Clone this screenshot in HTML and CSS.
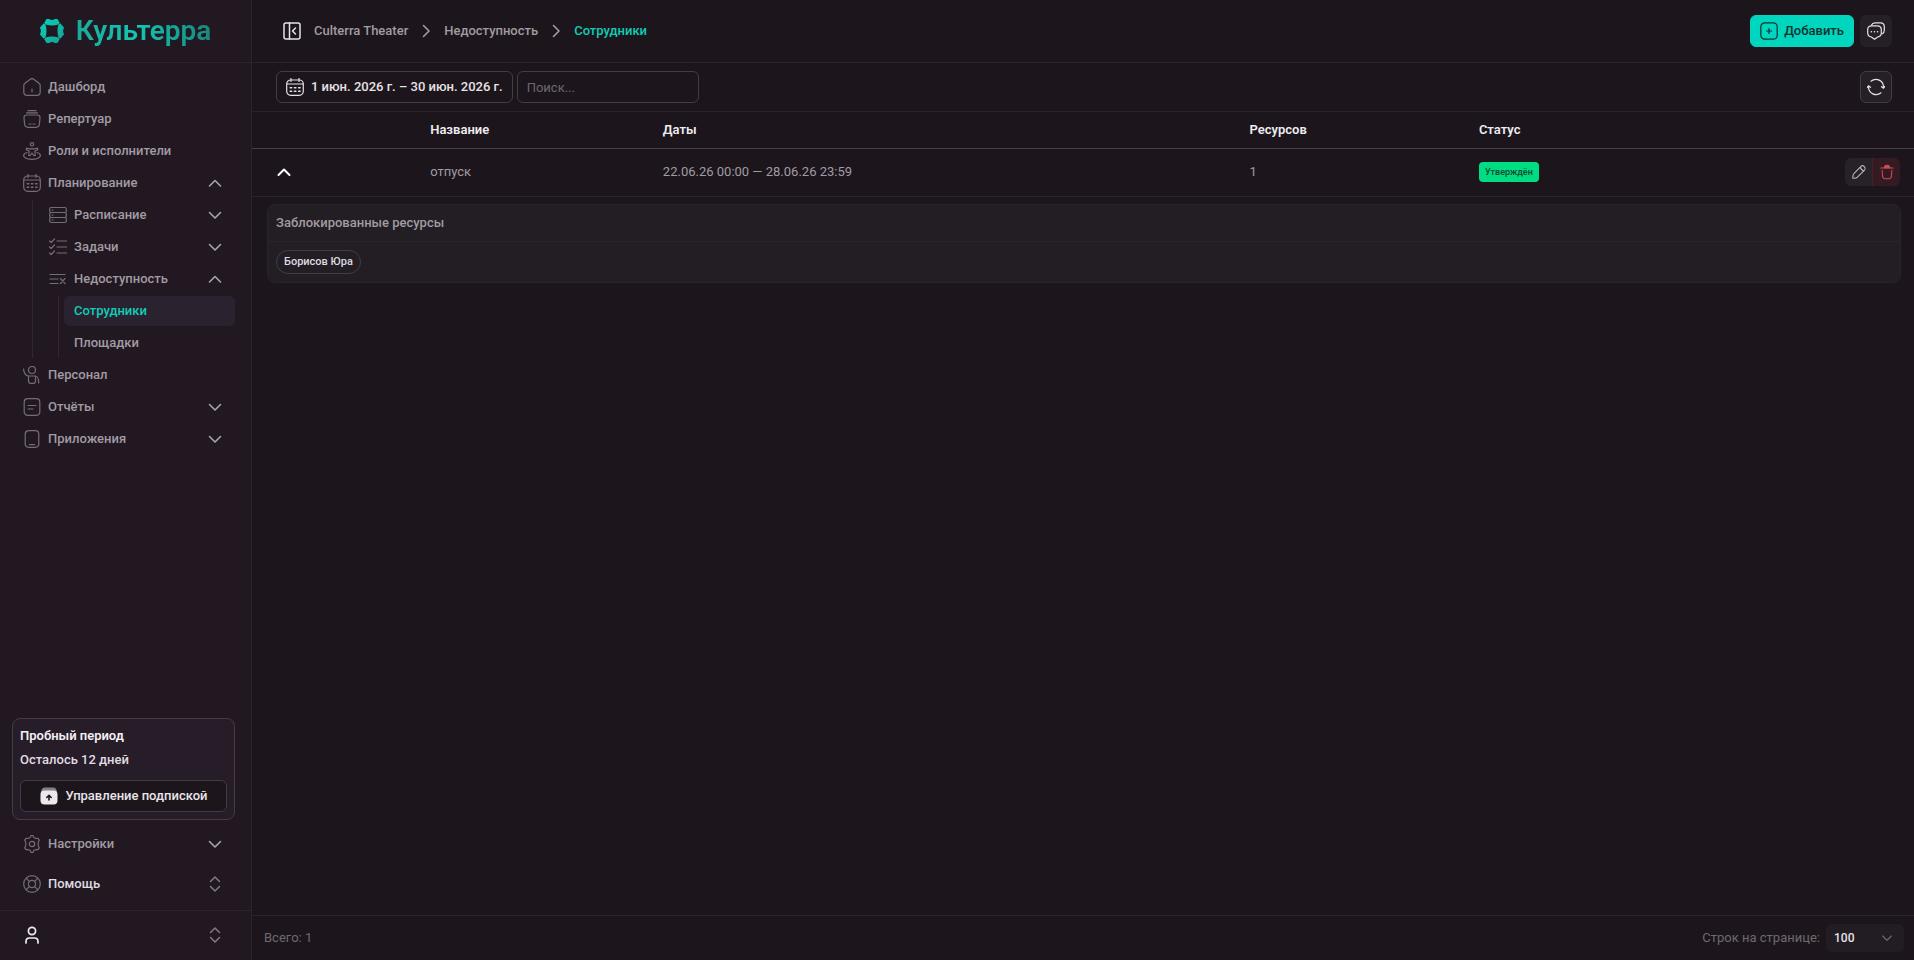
FILE: index.html
```html
<!DOCTYPE html>
<html lang="ru">
<head>
<meta charset="utf-8">
<title>Культерра — Сотрудники</title>
<link rel="stylesheet" href="styles.css">
</head>
<body>
<svg class="defs" aria-hidden="true">
  <symbol id="down" viewBox="0 0 18 18"><path d="M3.5 6.5 9 12l5.500-5.500"/></symbol>
  <symbol id="up" viewBox="0 0 18 18"><path d="M3.500 12 9 6.500 14.500 12"/></symbol>
  <symbol id="right" viewBox="0 0 18 18"><path d="M6.500 3.500 12 9l-5.500 5.500"/></symbol>
  <symbol id="updown" viewBox="0 0 18 18"><path d="M4.500 6.500 9 2l4.500 4.500M4.500 11.500 9 16l4.500-4.500"/></symbol>
  <symbol id="calendar" viewBox="0 0 18 18"><rect x=".7" y="2" width="16.600" height="15.300" rx="4"/><path d="M1 6h16M5 .5v3M13 .5v3"/><path stroke-width="1.500" stroke-dasharray="1.500 2.700" d="M4.200 9.700h11M4.200 13.200h11"/></symbol>
</svg>
<div class="app">
  <aside class="sidebar">
    <a class="brand" href="#">
      <svg class="brand-mark" viewBox="0 0 24 24"><defs><linearGradient id="g" x2="1" y2="1"><stop offset="0" stop-color="#08d2bd"/><stop offset="1" stop-color="#159f91"/></linearGradient></defs><path fill="url(#g)" fill-rule="evenodd" d="M6.500 0H9l3 1.300L15 0h2.500L19.500 3.500 24 8.500 23 12l1 3.500-4.500 5L17.500 24H15l-3-1.300L9 24H6.500l-2-3.500L0 15.500 1 12 0 8.500l4.500-5ZM5.500 5.500q2 6.500 0 13 6.500-2 13 0-2-6.500 0-13-6.500 2-13 0Z"/><path stroke="#221822" stroke-width=".7" d="m3.500 3.500 2 2m15-2-2 2m-15 15 2-2m15 2-2-2"/></svg>
      <span class="brand-name">Культерра</span>
    </a>
    <nav class="nav">
      <a class="item" href="#"><svg class="icon" viewBox="0 0 18 18"><path d="M.8 7.500q0-1.500 1.200-2.300l5.300-4q1.700-1.200 3.400 0l5.300 4q1.200.8 1.200 2.300V14q0 3.300-3.300 3.300H4.100Q.8 17.300.8 14ZM9 11v3"/></svg><span>Дашборд</span></a>
      <a class="item" href="#"><svg class="icon" viewBox="0 0 18 18"><path d="M1 8q-.2-3 3-3h10q3.200 0 3 3l-.6 6q-.3 3.300-3.500 3.300H5.100q-3.200 0-3.500-3.300ZM3.500 2.800h11M5 .7h8M6 14h2m2 0h2"/></svg><span>Репертуар</span></a>
      <a class="item" href="#"><svg class="icon" viewBox="0 0 18 18"><circle cx="9" cy="2.300" r="1.700"/><path d="M3.500 6q3 1.200 5.500.7 2.500.5 5.500-.7l.3 1.600-3 1.400.5 4.500h-1.500L9 11l-1.800 2.500H5.700L6.200 9l-3-1.400ZM4 10.500C-3 13 2 17.300 9 17.300s12-4.300 5-6.800"/></svg><span>Роли и исполнители</span></a>
      <details class="group" open>
        <summary class="item"><svg class="icon"><use href="#calendar"/></svg><span>Планирование</span><svg class="icon chev"><use href="#up"/></svg></summary>
        <div class="children">
          <a class="item" href="#"><svg class="icon" viewBox="0 0 18 18"><rect x=".7" y="1.500" width="16.600" height="5" rx="1.500"/><rect x=".7" y="6.500" width="16.600" height="5" rx="1.500"/><rect x=".7" y="11.500" width="16.600" height="5" rx="1.500"/><path d="M3 4h1m-1 5h1m-1 5h1"/></svg><span>Расписание</span><svg class="icon chev"><use href="#down"/></svg></a>
          <a class="item" href="#"><svg class="icon" viewBox="0 0 18 18"><path d="m.5 3 1.700 1.500L5.500 1M.5 9l1.700 1.500L5.500 7M.5 15l1.700 1.500L5.500 13M8 3h10M8 9h10M8 15h10"/></svg><span>Задачи</span><svg class="icon chev"><use href="#down"/></svg></a>
          <details class="group" open>
            <summary class="item"><svg class="icon" viewBox="0 0 18 18"><path d="M1 4.500h15M1 9h8M1 13.500h8M11.500 8.500l4.500 5m0-5-4.500 5"/></svg><span>Недоступность</span><svg class="icon chev"><use href="#up"/></svg></summary>
            <div class="children leaf">
              <a class="item active" href="#">Сотрудники</a>
              <a class="item" href="#">Площадки</a>
            </div>
          </details>
        </div>
      </details>
      <a class="item" href="#"><svg class="icon" viewBox="0 0 18 18"><circle cx="9" cy="4" r="3.500"/><path d="M.5 3c.5 4 2 7 5.500 7h6c3 0 3.700 2 3.700 7M5.500 10v5q0 2.300 2.300 2.300h2.400q2.300 0 2.300-2.300v-5"/></svg><span>Персонал</span></a>
      <a class="item" href="#"><svg class="icon" viewBox="0 0 18 18"><rect x="1.200" y=".7" width="15.600" height="16.600" rx="3.500"/><path d="M5 7.500h8M5 11h5"/></svg><span>Отчёты</span><svg class="icon chev"><use href="#down"/></svg></a>
      <a class="item" href="#"><svg class="icon" viewBox="0 0 18 18"><rect x="2.200" y=".7" width="13.600" height="16.600" rx="3.500"/><path d="M6.500 14.700h5"/></svg><span>Приложения</span><svg class="icon chev"><use href="#down"/></svg></a>
    </nav>
    <section class="trial">
      <strong>Пробный период</strong>
      <span>Осталось 12 дней</span>
      <button class="btn" type="button"><svg class="icon" viewBox="0 0 18 18"><path d="M1 6q0-5.500 4-5.500h8q4 0 4 5.500Z" fill="#858087" stroke="none"/><rect x=".5" y="3.500" width="17" height="14" rx="4" fill="#ece8ed" stroke="none"/><path d="M9 13V8.500m-2.200 2L9 8.300l2.200 2.200" stroke="#1d171e" stroke-width="1.600"/></svg><span>Управление подпиской</span></button>
    </section>
    <div class="lower">
      <a class="item" href="#"><svg class="icon" viewBox="0 0 18 18"><path d="m7 2.500 1-1.800h2l1 1.800 1.800 1 2.200-.1 1.300 1.800-1.100 2v3.600l1.100 2-1.300 1.800-2.200-.1-1.800 1-1 1.800H8l-1-1.800-1.800-1-2.200.1-1.300-1.800 1.100-2V7.200l-1.100-2L3 3.400l2.200.1Z"/><circle cx="9" cy="9" r="2.700"/></svg><span>Настройки</span><svg class="icon chev"><use href="#down"/></svg></a>
      <button class="item bright" type="button"><svg class="icon" viewBox="0 0 18 18"><circle cx="9" cy="9" r="8.300"/><circle cx="9" cy="9" r="3.600"/><path d="m3.300 3.300 3.200 3.200m8.200-3.200-3.200 3.200m-8.200 8.200 3.200-3.200m8.200 3.200-3.200-3.200"/></svg><span>Помощь</span><svg class="icon sort"><use href="#updown"/></svg></button>
    </div>
    <div class="account">
      <button class="item" type="button" aria-label="Профиль"><svg class="icon person" viewBox="0 0 18 18"><circle cx="9" cy="5" r="3.600"/><path d="M3 17v-1.500q0-3.500 3.500-3.500h5q3.500 0 3.500 3.500V17"/></svg><svg class="icon sort"><use href="#updown"/></svg></button>
    </div>
  </aside>

  <main class="main">
    <header class="header">
      <button class="plain" type="button" aria-label="Свернуть меню"><svg class="icon" viewBox="0 0 18 18"><rect x="1" y="1" width="16" height="16" rx="2"/><path d="M6.500 1v16M12.500 6 9.500 9l3 3"/></svg></button>
      <nav class="crumbs">
        <a href="#">Culterra Theater</a>
        <svg class="icon"><use href="#right"/></svg>
        <a href="#">Недоступность</a>
        <svg class="icon"><use href="#right"/></svg>
        <a class="current" href="#">Сотрудники</a>
      </nav>
      <button class="btn primary" type="button"><svg class="icon" viewBox="0 0 18 18"><rect x=".8" y=".8" width="16.400" height="16.400" rx="4"/><path d="M9 6.500v5M6.500 9h5"/></svg><span>Добавить</span></button>
      <button class="square" type="button" aria-label="Чат"><svg class="icon" viewBox="0 0 18 18"><path d="M4.500 3Q5.500.8 8 .8h5.500q3.800 0 3.800 4V8q0 3-2 3.800"/><path d="M.7 7.800q0-4 4-4h5.600q4 0 4 4v3q0 3.700-3.600 4.200L7.500 17.300 4.300 15Q.7 14.500.7 10.800Z"/><path stroke-width="1.500" d="M4.300 9.700h.1m3 0h.1m3 0h.1"/></svg></button>
    </header>

    <div class="toolbar">
      <button class="btn date" type="button"><svg class="icon"><use href="#calendar"/></svg><span>1 июн. 2026 г. – 30 июн. 2026 г.</span></button>
      <input class="search" type="text" placeholder="Поиск..." aria-label="Поиск">
      <button class="square outlined" type="button" aria-label="Обновить"><svg class="icon" viewBox="0 0 18 18"><path d="M4 3.200a7.600 7.600 0 0 1 12.500 6M14 14.800A7.600 7.600 0 0 1 1.500 8.800M14.500 8.700l2 1.500 1.300-1.800M.2 9.600l1.300-1.800 2 1.500"/></svg></button>
    </div>

    <div class="content">
      <table class="table">
        <colgroup><col class="c-open"><col class="c-name"><col class="c-dates"><col class="c-count"><col><col class="c-act"></colgroup>
        <thead>
          <tr><th></th><th>Название</th><th>Даты</th><th>Ресурсов</th><th>Статус</th><th></th></tr>
        </thead>
        <tbody>
          <tr class="row">
            <td class="open"><button class="plain" type="button" aria-label="Свернуть строку"><svg class="icon"><use href="#up"/></svg></button></td>
            <td>отпуск</td>
            <td>22.06.26 00:00 — 28.06.26 23:59</td>
            <td>1</td>
            <td><span class="badge">Утверждён</span></td>
            <td class="act"><div class="actions"><button type="button" aria-label="Изменить"><svg class="icon" viewBox="0 0 18 18"><path d="M2 16q-.3-4 1.500-5.500l8-8q1.700-1.500 3.500.5t.5 3.500l-8 8Q6 16.300 2 16ZM10.500 3.500q.5 3.500 4 4"/></svg></button><button class="danger" type="button" aria-label="Удалить"><svg class="icon" viewBox="0 0 18 18"><path d="M2 4.500h14M3.500 7l.5 6.500q.2 3 3 3h4q2.800 0 3-3l.5-6.500"/><path d="M6 4.300Q6 1.500 9 1.500t3 2.800Z" fill="currentColor"/></svg></button></div></td>
          </tr>
          <tr>
            <td class="details" colspan="6">
              <section class="panel">
                <h2>Заблокированные ресурсы</h2>
                <div class="chips"><span class="chip">Борисов Юра</span></div>
              </section>
            </td>
          </tr>
        </tbody>
      </table>
    </div>

    <footer class="footer">
      <span>Всего: 1</span>
      <label for="rows">Строк на странице:</label>
      <div class="select"><select id="rows"><option>100</option></select><svg class="icon"><use href="#down"/></svg></div>
    </footer>
  </main>
</div>
</body>
</html>
```
FILE: styles.css
```css
* { box-sizing: border-box; }
body {
  margin: 0;
  background: #1c161c;
  color: #a19ba2;
  font: 500 13px/20px Roboto, "Liberation Sans", sans-serif;
}
a { color: inherit; text-decoration: none; }
button, input, select { font: inherit; color: inherit; }
button { border: 0; background: none; padding: 0; cursor: pointer; }
.defs { display: none; }
.icon {
  width: 18px;
  height: 18px;
  flex: none;
  fill: none;
  stroke: currentColor;
  stroke-width: 1.2;
  stroke-linecap: round;
  stroke-linejoin: round;
}
.app { display: flex; height: 100vh; }

.sidebar {
  width: 252px;
  flex: none;
  display: flex;
  flex-direction: column;
  background: #221822;
  border-right: 1px solid #2c242d;
}
.brand {
  height: 63px;
  flex: none;
  display: flex;
  align-items: center;
  justify-content: center;
  gap: 12px;
  border-bottom: 1px solid #2d252e;
}
.brand-mark { width: 24px; height: 24px; }
.brand-name {
  font-size: 28px;
  line-height: 40px;
  font-weight: 600;
  color: transparent;
  background: linear-gradient(90deg, #1aaa99, #12c6b3 45%, #19877d);
  background-clip: text;
}
.nav {
  flex: 1;
  min-height: 0;
  padding: 9px 16px 0 12px;
  display: flex;
  flex-direction: column;
  gap: 2px;
}
.item {
  width: 100%;
  height: 30px;
  display: flex;
  align-items: center;
  gap: 7px;
  padding: 0 11px;
  border-radius: 6px;
  text-align: left;
  list-style: none;
  cursor: pointer;
}
.item .icon { color: #756d76; }
.item .chev, .item .sort { margin-left: auto; }
.item .chev { color: #aaa4ab; stroke-width: 1.6; }
.item .sort { color: #817a82; stroke-width: 1.5; }
.children {
  display: flex;
  flex-direction: column;
  gap: 2px;
  margin: 2px 0 0 20px;
  padding-left: 5px;
  border-left: 1px solid #30282f;
}
.children .children { margin-left: 20px; }
.leaf .item { padding: 0 10px; }
.item.active { background: #2b222f; color: #10cdb7; }

.trial {
  margin: 0 16px 0 12px;
  padding: 7px;
  border: 1px solid #443c44;
  border-radius: 8px;
  background: #261d29;
  color: #e0dce1;
  display: flex;
  flex-direction: column;
  gap: 4px;
}
.trial strong { font-weight: 600; color: #f2eff3; }
.trial .btn { margin-top: 6px; justify-content: center; color: #e8e4e9; }
.btn {
  height: 32px;
  display: flex;
  align-items: center;
  gap: 8px;
  padding: 0 10px;
  border: 1px solid #443c44;
  border-radius: 6px;
  background: #1c161c;
  white-space: nowrap;
}
.lower {
  padding: 9px 16px 11px 12px;
  display: flex;
  flex-direction: column;
  gap: 10px;
}
.item.bright { color: #dfdbe0; }
.account {
  padding: 9px 16px 10px 12px;
  border-top: 1px solid #2d252e;
}
.item .person { color: #eeebef; stroke-width: 1.7; }

.main { flex: 1; min-width: 0; display: flex; flex-direction: column; }
.header {
  height: 63px;
  flex: none;
  display: flex;
  align-items: center;
  padding: 0 22px 0 31px;
  border-bottom: 1px solid #2a232a;
}
.plain { display: flex; color: #e6e2e7; }
.plain .icon { stroke-width: 1.5; }
.crumbs {
  flex: 1;
  display: flex;
  align-items: center;
  gap: 9px;
  margin-left: 13px;
}
.crumbs .icon { stroke-width: 1.6; }
.crumbs .current { color: #10cdb7; }
.primary { background: #00d5be; border-color: #00d5be; color: #10302e; gap: 6px; padding: 0 9px; }
.square {
  width: 32px;
  height: 32px;
  margin-left: 6px;
  display: grid;
  place-items: center;
  border-radius: 6px;
  background: #252027;
  color: #e6e2e7;
}
.toolbar {
  height: 49px;
  flex: none;
  display: flex;
  align-items: center;
  gap: 4px;
  padding: 0 22px 0 24px;
  border-bottom: 1px solid #2a232a;
}
.date { color: #e6e2e7; gap: 7px; padding: 0 9px; }
.search {
  width: 182px;
  height: 32px;
  padding: 0 9px;
  border: 1px solid #443c44;
  border-radius: 6px;
  background: #1c161c;
  font-weight: 400;
}
.search::placeholder { color: #6d666e; }
.outlined { margin-left: auto; border: 1px solid #443c44; }

.content { flex: 1; min-height: 0; overflow: auto; }
.table { width: 100%; table-layout: fixed; border-collapse: separate; border-spacing: 0; font-weight: 400; }
.c-open { width: 10%; }
.c-name { width: 14%; }
.c-dates { width: 35.3%; }
.c-count { width: 13.8%; }
.c-act { width: 80px; }
.table th {
  height: 37px;
  padding: 0 12px;
  text-align: left;
  font-weight: 600;
  color: #efecf0;
  border-bottom: 1px solid #484149;
}
.row td { height: 48px; padding: 0 12px 2px; border-bottom: 1px solid #2a232a; }
.table .open { padding-left: 23px; }
.open .icon { stroke-width: 2; color: #fff; }
.badge {
  display: inline-block;
  padding: 0 6px;
  border-radius: 4px;
  background: #00dc82;
  color: #12472f;
  font-size: 9px;
  font-weight: 500;
  vertical-align: middle;
}
.table .act { padding: 0 14px 2px 0; }
.actions { display: flex; justify-content: flex-end; }
.actions button {
  width: 27px;
  height: 28px;
  display: grid;
  place-items: center;
  background: #272128;
  color: #bcb6bd;
  border-radius: 6px 0 0 6px;
}
.actions .icon { width: 16px; height: 16px; }
.actions .danger {
  background: #341a22;
  color: #cf4c56;
  border-left: 1px solid #482029;
  border-radius: 0 6px 6px 0;
  width: 28px;
}
.details { padding: 7px 13px 0 15px; }
.panel { border: 1px solid #29232a; border-radius: 8px; background: #231d24; }
.panel h2 {
  margin: 0;
  padding: 8px;
  font-size: 13px;
  font-weight: 500;
  line-height: 20px;
  border-bottom: 1px solid #29232a;
}
.chips { display: flex; gap: 4px; padding: 8px; }
.chip {
  padding: 1px 7px;
  border: 1px solid #443c44;
  border-radius: 12px;
  color: #dfdbe0;
  font-size: 11px;
  font-weight: 500;
}

.footer {
  height: 45px;
  flex: none;
  display: flex;
  align-items: center;
  padding: 0 10px 0 12px;
  border-top: 1px solid #2a232a;
  color: #6f6870;
  font-weight: 400;
}
.footer label { margin-left: auto; }
.select { display: grid; align-items: center; margin-left: 6px; }
.select select, .select .icon { grid-area: 1 / 1; }
.select select {
  appearance: none;
  width: 78px;
  height: 28px;
  padding: 0 8px;
  border: 0;
  border-radius: 6px;
  background: #221c23;
  color: #e6e2e7;
  font-size: 12px;
  font-weight: 500;
}
.select .icon { width: 14px; height: 14px; margin-right: 10px; justify-self: end; pointer-events: none; stroke-width: 1.6; }
```
